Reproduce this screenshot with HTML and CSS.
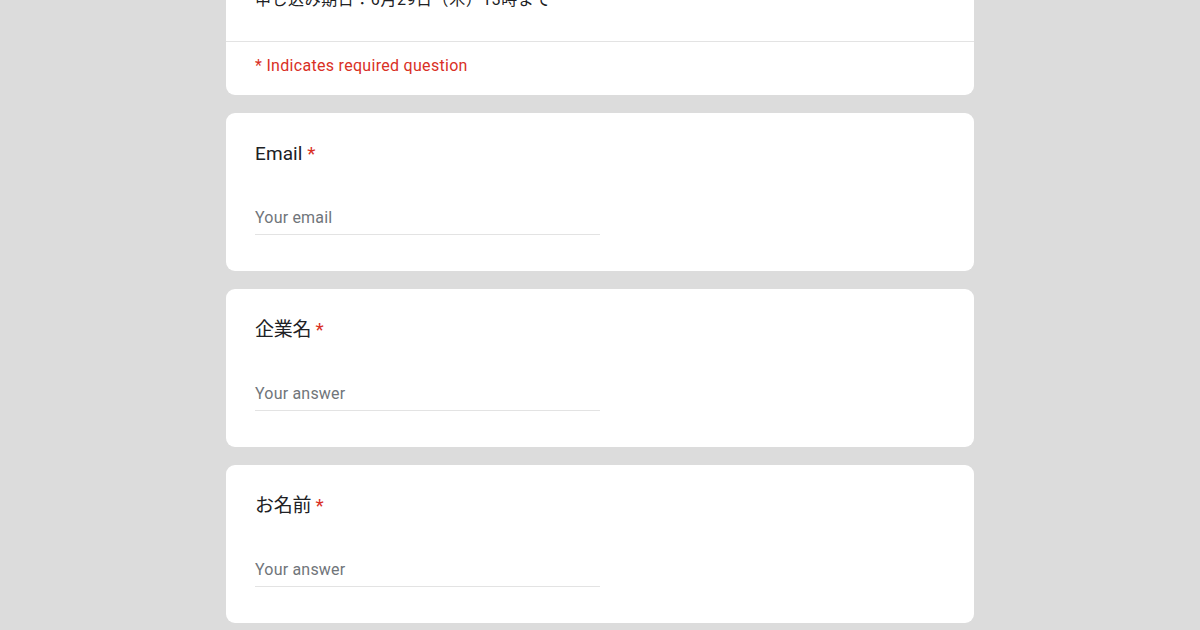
FILE: index.html
```html
<!DOCTYPE html>
<html lang="ja">
<head>
<meta charset="utf-8">
<link rel="stylesheet" href="styles.css">
</head>
<body>
<main class="form">
  <section class="card header-card">
    <div class="desc">申し込み期日：6月29日（木）13時まで</div>
    <div class="required-note">* Indicates required question</div>
  </section>
  <section class="card question">
    <div class="q-title">Email <span class="star">*</span></div>
    <div class="q-input">Your email</div>
  </section>
  <section class="card question">
    <div class="q-title jp">企業名 <span class="star">*</span></div>
    <div class="q-input">Your answer</div>
  </section>
  <section class="card question">
    <div class="q-title jp">お名前 <span class="star">*</span></div>
    <div class="q-input">Your answer</div>
  </section>
</main>
</body>
</html>
```
FILE: styles.css
```css
html, body {
  margin: 0;
  padding: 0;
  background: #dcdcdc;
}
body {
  font-family: Roboto, "Noto Sans CJK JP", sans-serif;
  color: #202124;
  overflow: hidden;
  height: 630px;
}
.form {
  width: 748px;
  margin: -12px auto 0;
  display: flex;
  flex-direction: column;
  gap: 18px;
}
.card {
  background: #fff;
  border-radius: 9px;
}
.header-card {
  border-top-left-radius: 0;
  border-top-right-radius: 0;
}
.desc {
  font-size: 16px;
  line-height: 24px;
  letter-spacing: 0.55px;
  padding: 0 29px 29px;
  border-bottom: 1px solid #e3e3e3;
}
.required-note {
  color: #d93025;
  font-size: 16px;
  line-height: 18px;
  padding: 15px 29px 20px;
  letter-spacing: 0.3px;
}
.question {
  height: 158px;
  box-sizing: border-box;
  padding: 28px 29px 0;
}
.q-title {
  font-size: 19px;
  line-height: 26px;
  letter-spacing: 0.1px;
}
.q-title.jp {
  letter-spacing: -0.3px;
}
.star {
  color: #d93025;
}
.q-input {
  margin-top: 41px;
  width: 345px;
  font-size: 16px;
  line-height: 20px;
  color: #70757a;
  padding-bottom: 6px;
  border-bottom: 1px solid #e3e3e3;
  letter-spacing: 0.2px;
}
```
